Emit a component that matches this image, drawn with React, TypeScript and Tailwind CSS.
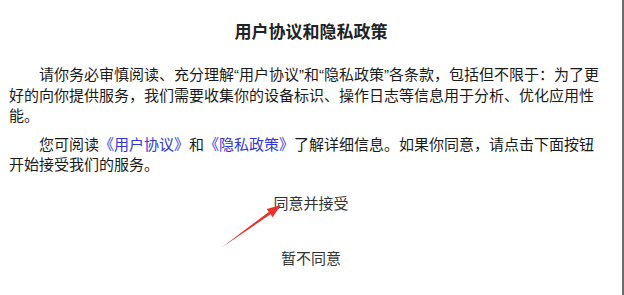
const font = { fontFamily: '"Liberation Sans", "Noto Sans CJK SC", sans-serif' }

export default function App() {
  return (
    <div className="w-[624px] h-[295px] bg-white" style={font}>
      <div className="relative w-[624px] h-[295px] border-r-2 border-[#6b6b6b] flex flex-col">
        <h1 className="pt-[21px] text-center text-[17px] leading-[24px] font-bold text-[#222]">
          用户协议和隐私政策
        </h1>

        <div className="pl-[9px] pr-[14px] text-[15px] leading-[20.5px] text-[#1a1a1a]">
          <p className="mt-[20px] indent-[2em]">
            请你务必审慎阅读、充分理解“用户协议”和“隐私政策”各条款，包括但不限于：为了更好的向你提供服务，我们需要收集你的设备标识、操作日志等信息用于分析、优化应用性能。
          </p>
          <p className="mt-[8px] indent-[2em]">
            您可阅读<span className="text-[#3236d8]">《用户协议》</span>和<span className="text-[#3236d8]">《隐私政策》</span>了解详细信息。如果你同意，请点击下面按钮开始接受我们的服务。
          </p>
        </div>

        <div className="flex flex-col items-center mt-[9px]">
          <button className="h-[40px] px-4 text-[15px] text-[#333]">同意并接受</button>
          <button className="h-[40px] px-4 mt-[15px] text-[15px] text-[#333]">暂不同意</button>
        </div>

        {/* red annotation arrow */}
        <svg className="absolute left-[215px] top-[195px]" width="70" height="60" viewBox="0 0 70 60">
          <polygon
            points="6,53 53.78,16.91 51.74,14.07 66,10 57.55,22.19 55.52,19.35"
            fill="#e8322b"
          />
        </svg>
      </div>
    </div>
  )
}
